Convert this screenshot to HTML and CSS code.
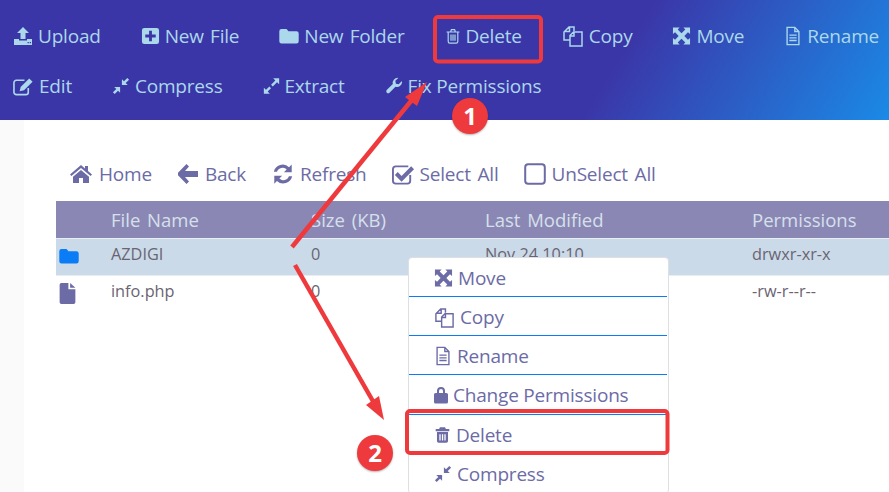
FILE: index.html
```html
<!DOCTYPE html>
<html lang="en">
<head>
    <meta charset="UTF-8">
    <meta name="viewport" content="width=device-width, initial-scale=1.0">
    <title>File Manager</title>
    <link rel="stylesheet" href="styles.css">
</head>
<body>
    <svg class="icon-defs" width="0" height="0">
        <symbol id="i-upload" viewBox="0 0 20 20"><path d="M10 1l6 6h-3.500v6h-5V7H4z"/><path d="M1 13h5v1.500h8V13h5v6H1zM14.500 16v1.200h1.300V16zM16.700 16v1.200H18V16z" fill-rule="evenodd"/></symbol>
        <symbol id="i-plus" viewBox="0 0 20 20"><path fill-rule="evenodd" d="M3.500 1.500h13a2.500 2.500 0 0 1 2.500 2.500v12a2.500 2.500 0 0 1-2.500 2.500h-13A2.500 2.500 0 0 1 1 16V4a2.500 2.500 0 0 1 2.500-2.500zM8.500 4.500v4h-4v3h4v4h3v-4h4v-3h-4v-4z"/></symbol>
        <symbol id="i-folder" viewBox="0 0 20 20"><path d="M2.500 3h5l2 2.300h8A2.200 2.200 0 0 1 19.700 7.500v7.800a2.200 2.200 0 0 1-2.200 2.200h-15A2.200 2.200 0 0 1 .3 15.300V5.200A2.200 2.200 0 0 1 2.500 3z"/></symbol>
        <symbol id="i-trash-o" viewBox="0 0 20 20"><path fill="none" stroke="currentColor" stroke-width="1.500" d="M2 5h16M4 5v12a2 2 0 0 0 2 2h8a2 2 0 0 0 2-2V5M7 5l1-3h4l1 3M7.500 8v8M10 8v8M12.500 8v8"/></symbol>
        <symbol id="i-trash" viewBox="0 0 20 20"><path fill-rule="evenodd" d="M7 1h6l1 2h4v2.500H2V3h4zM3.500 6.500h13V17a2 2 0 0 1-2 2h-9a2 2 0 0 1-2-2zM6.300 9v7.500h1.500V9zM9.300 9v7.500h1.500V9zM12.200 9v7.500h1.500V9z"/></symbol>
        <symbol id="i-copy" viewBox="0 0 22 22"><path fill="none" stroke="currentColor" stroke-width="1.500" d="M7.500 15H2V7l5-5h5v4M8 10.500L11.500 7H20v14H8zM12 7v4H8M7.500 2v4.500H2"/></symbol>
        <symbol id="i-move" viewBox="0 0 20 20"><path d="M1 1h7L6 3.200 10 7l4-3.800L12 1h7v7l-2.200-2L13 10l3.800 4 2.200-2v7h-7l2-2.200L10 13l-4 3.800L8 19H1v-7l2.200 2L7 10 3.200 6 1 8z"/></symbol>
        <symbol id="i-file-o" viewBox="0 0 18 22"><path fill="none" stroke="currentColor" stroke-width="1.500" d="M11 1.500H2.500v19h13V6zM11 1.500V6h4.500M5 10h8M5 13h8M5 16h8"/></symbol>
        <symbol id="i-edit" viewBox="0 0 22 20"><path fill="none" stroke="currentColor" stroke-width="1.700" d="M16 11.500V16a2.500 2.500 0 0 1-2.500 2.500h-10A2.500 2.500 0 0 1 1 16V6a2.500 2.500 0 0 1 2.500-2.500H12"/><path d="M17 1.500l3.500 3.500-9 9-4.500 1 1-4.500z"/></symbol>
        <symbol id="i-compress" viewBox="0 0 20 20"><path d="M11 2.500v6.500h6.500l-2.300-2.300L19 3l-2-2-3.700 3.800zM9 11H2.500l2.300 2.300L1 17l2 2 3.700-3.800L9 17.500z"/></symbol>
        <symbol id="i-expand" viewBox="0 0 20 20"><path d="M19 1h-7l2.500 2.500L9.500 8.500l2 2 5-5L19 8zM1 19h7l-2.500-2.500 4-4-2-2-4 4L1 12z"/></symbol>
        <symbol id="i-wrench" viewBox="0 0 20 20"><path d="M19 5.500a5.500 5.500 0 0 1-7.400 5.200L5 17.500a2.200 2.200 0 0 1-3.100-3.100l6.800-6.700A5.500 5.500 0 0 1 14.800 1L11.500 4.300l.6 3.100 3.100.6L18.500 4.700c.3.200.5.500.5.800z"/></symbol>
        <symbol id="i-home" viewBox="0 0 24 20"><path d="M12 1L1 10.500l1.400 1.600L12 4l9.600 8.100 1.400-1.600-4-3.400V2h-3v2.600z"/><path d="M12 6l-8 6.800V19h6v-5h4v5h6v-6.200z"/></symbol>
        <symbol id="i-back" viewBox="0 0 22 22"><path d="M9.500 1l2.500 2.500L8 8h13v6H8l4 4.500L9.500 21 1 12.300V9.700z"/></symbol>
        <symbol id="i-refresh" viewBox="0 0 24 24"><path d="M21.500 1.500v8.500H13l3-3A6.500 6.500 0 0 0 5.500 9.500H2A10 10 0 0 1 18.600 4.500zM2.500 22.500V14H11l-3 3a6.500 6.500 0 0 0 10.500-2.500H22A10 10 0 0 1 5.400 19.500z"/></symbol>
        <symbol id="i-check" viewBox="0 0 24 22"><path fill="none" stroke="currentColor" stroke-width="2" d="M19 12v6a3 3 0 0 1-3 3H4a3 3 0 0 1-3-3V6a3 3 0 0 1 3-3h13"/><path d="M6 9l4 4 10-10 3 3-13 13-7-7z"/></symbol>
        <symbol id="i-square" viewBox="0 0 22 22"><rect x="1.200" y="1.200" width="19.600" height="19.600" rx="3" fill="none" stroke="currentColor" stroke-width="2"/></symbol>
        <symbol id="i-file" viewBox="0 0 18 24"><path d="M0 2a2 2 0 0 1 2-2h8v7h8v15a2 2 0 0 1-2 2H2a2 2 0 0 1-2-2zM12 0l6 5.500h-6z"/></symbol>
        <symbol id="i-lock" viewBox="0 0 14 18"><path fill-rule="evenodd" d="M3 7V5a4 4 0 0 1 8 0v2h1.500A1.500 1.500 0 0 1 14 8.500V16a1.500 1.500 0 0 1-1.500 1.500h-11A1.500 1.500 0 0 1 0 16V8.500A1.500 1.500 0 0 1 1.500 7zM5 7h4V5a2 2 0 0 0-4 0z"/></symbol>
    </svg>

    <div class="page">
        <header class="top-actions">
            <a class="action"><svg class="ico w20"><use href="#i-upload"/></svg>Upload</a>
            <a class="action wide-word"><svg class="ico w19"><use href="#i-plus"/></svg>New File</a>
            <a class="action wide-word"><svg class="ico w20"><use href="#i-folder"/></svg>New Folder</a>
            <a class="action"><svg class="ico w16"><use href="#i-trash-o"/></svg>Delete</a>
            <a class="action"><svg class="ico w22"><use href="#i-copy"/></svg>Copy</a>
            <a class="action"><svg class="ico w19"><use href="#i-move"/></svg>Move</a>
            <a class="action"><svg class="ico w18"><use href="#i-file-o"/></svg>Rename</a>
            <a class="action"><svg class="ico w21"><use href="#i-edit"/></svg>Edit</a>
            <a class="action"><svg class="ico w18"><use href="#i-compress"/></svg>Compress</a>
            <a class="action"><svg class="ico w17"><use href="#i-expand"/></svg>Extract</a>
            <a class="action"><svg class="ico w18"><use href="#i-wrench"/></svg>Fix Permissions</a>
        </header>

        <div class="content">
            <nav class="file-nav">
                <a class="nav-item"><svg class="ico w24"><use href="#i-home"/></svg>Home</a>
                <a class="nav-item"><svg class="ico w22"><use href="#i-back"/></svg>Back</a>
                <a class="nav-item tight"><svg class="ico w24"><use href="#i-refresh"/></svg>Refresh</a>
                <a class="nav-item tight"><svg class="ico w23"><use href="#i-check"/></svg>Select All</a>
                <a class="nav-item"><svg class="ico w22"><use href="#i-square"/></svg>UnSelect All</a>
            </nav>

            <table class="file-table">
                <thead>
                    <tr>
                        <th class="col-icon"></th>
                        <th class="col-name">File Name</th>
                        <th class="col-size">Size (KB)</th>
                        <th class="col-date">Last Modified</th>
                        <th>Permissions</th>
                    </tr>
                </thead>
                <tbody>
                    <tr class="selected">
                        <td><svg class="ico w20 folder-ico"><use href="#i-folder"/></svg></td>
                        <td>AZDIGI</td>
                        <td>0</td>
                        <td>Nov 24 10:10</td>
                        <td>drwxr-xr-x</td>
                    </tr>
                    <tr>
                        <td><svg class="ico file-ico"><use href="#i-file"/></svg></td>
                        <td>info.php</td>
                        <td>0</td>
                        <td></td>
                        <td>-rw-r--r--</td>
                    </tr>
                </tbody>
            </table>
        </div>

        <ul class="context-menu">
            <li><svg class="ico w19"><use href="#i-move"/></svg>Move</li>
            <li><svg class="ico w21"><use href="#i-copy"/></svg>Copy</li>
            <li><svg class="ico w18"><use href="#i-file-o"/></svg>Rename</li>
            <li><svg class="ico w14"><use href="#i-lock"/></svg>Change Permissions</li>
            <li><svg class="ico w17"><use href="#i-trash"/></svg>Delete</li>
            <li><svg class="ico w18"><use href="#i-compress"/></svg>Compress</li>
        </ul>

        <svg class="annotations" viewBox="0 0 889 492">
            <rect x="435" y="17" width="106" height="44.500" rx="3"/>
            <rect x="407" y="411" width="260.500" height="42" rx="3"/>
            <line x1="292" y1="247" x2="420" y2="90"/>
            <line x1="295" y1="265" x2="378" y2="410"/>
            <polygon points="427,82 405,97 417,106"/>
            <polygon points="384,420 366,405 379,396"/>
        </svg>
        <div class="step step-one">1</div>
        <div class="step step-two">2</div>
    </div>
</body>
</html>
```

FILE: styles.css
```css
* {
    margin: 0;
    padding: 0;
    box-sizing: border-box;
}

body {
    font-family: "Open Sans", "Noto Sans", sans-serif;
    background: #ffffff;
    overflow: hidden;
}

.icon-defs {
    display: block;
    height: 0;
}

.page {
    position: relative;
    width: 889px;
    height: 492px;
    overflow: hidden;
}

.ico {
    fill: currentColor;
    flex-shrink: 0;
    height: 20px;
}

.w14 { width: 14px; height: 18px; }
.w16 { width: 16px; }
.w17 { width: 17px; }
.w18 { width: 18px; }
.w19 { width: 19px; }
.w20 { width: 20px; }
.w21 { width: 21px; height: 21px; }
.w22 { width: 22px; height: 22px; }
.w23 { width: 23px; height: 22px; }
.w24 { width: 24px; height: 22px; }

.top-actions {
    height: 120px;
    padding: 11px 0 0 13px;
    display: flex;
    flex-wrap: wrap;
    align-content: flex-start;
    column-gap: 40px;
    color: #abd8ea;
    background: linear-gradient(122deg, #3b36a8 68%, #1a8ae6 100%);
}

.action {
    display: flex;
    align-items: center;
    gap: 5px;
    height: 50px;
    font-size: 19px;
    letter-spacing: -0.2px;
}

.wide-word {
    word-spacing: 1.500px;
}

.content {
    padding: 41px 0 0 56px;
    height: 372px;
    background: linear-gradient(to right, #fafafa 24px, #ffffff 24px);
}

.file-nav {
    display: flex;
    gap: 25px;
    height: 26px;
    padding-left: 13px;
    margin-bottom: 14px;
    color: #6c6ba6;
}

.nav-item {
    display: flex;
    align-items: center;
    gap: 6px;
    font-size: 19px;
    letter-spacing: -0.2px;
    word-spacing: 2px;
}

.tight {
    gap: 5px;
}

.file-table {
    width: 833px;
    border-collapse: collapse;
    table-layout: fixed;
    font-size: 16.300px;
    color: #6a6472;
}

.file-table th {
    height: 37px;
    padding-top: 1px;
    font-size: 18.500px;
    font-weight: 400;
    word-spacing: 2px;
    text-align: left;
    color: #d6e0ea;
    background: #8a87b5;
    border-bottom: 1px solid #e8eef4;
}

.file-table td {
    height: 37px;
    padding-bottom: 6px;
}

.col-icon { width: 55px; }
.col-name { width: 200px; }
.col-size { width: 174px; }
.col-date { width: 267px; }

.selected td {
    background: #cbdae8;
    border-bottom: 1px solid #e8eef4;
}

.folder-ico {
    display: block;
    margin: 5px 0 0 3px;
    color: #0a7cf5;
}

.file-ico {
    display: block;
    width: 17px;
    height: 21px;
    margin: 6px 0 0 3px;
    color: #6c6ba6;
}

.context-menu {
    position: absolute;
    left: 408px;
    top: 257px;
    width: 261px;
    list-style: none;
    background: #ffffff;
    border: 1px solid #dcdfe4;
    border-radius: 4px;
    color: #6c6ba6;
    font-size: 19px;
    letter-spacing: -0.2px;
}

.context-menu li {
    display: flex;
    align-items: center;
    gap: 5px;
    height: 39px;
    padding: 2px 0 0 25px;
    border-bottom: 1px solid #0a7cf5;
    margin-right: 1px;
}

.context-menu li:nth-child(4) {
    height: 40px;
    padding-top: 0;
}

.context-menu li:last-child {
    padding-top: 0;
    border-bottom: none;
}

.annotations {
    position: absolute;
    left: 0;
    top: 0;
    width: 889px;
    height: 492px;
}

.annotations rect {
    fill: none;
    stroke: #ee3a3c;
    stroke-width: 4;
}

.annotations line {
    stroke: #ee3a3c;
    stroke-width: 4.500;
}

.annotations polygon {
    fill: #ee3a3c;
}

.step {
    position: absolute;
    width: 36px;
    height: 36px;
    border-radius: 50%;
    background: #ee3a3c;
    color: #ffffff;
    font-size: 24px;
    font-weight: 700;
    line-height: 36px;
    text-align: center;
    box-shadow: 0 1px 2px rgba(0, 0, 0, 0.3);
}

.step-one {
    left: 452px;
    top: 98px;
}

.step-two {
    left: 357px;
    top: 435px;
}
```
